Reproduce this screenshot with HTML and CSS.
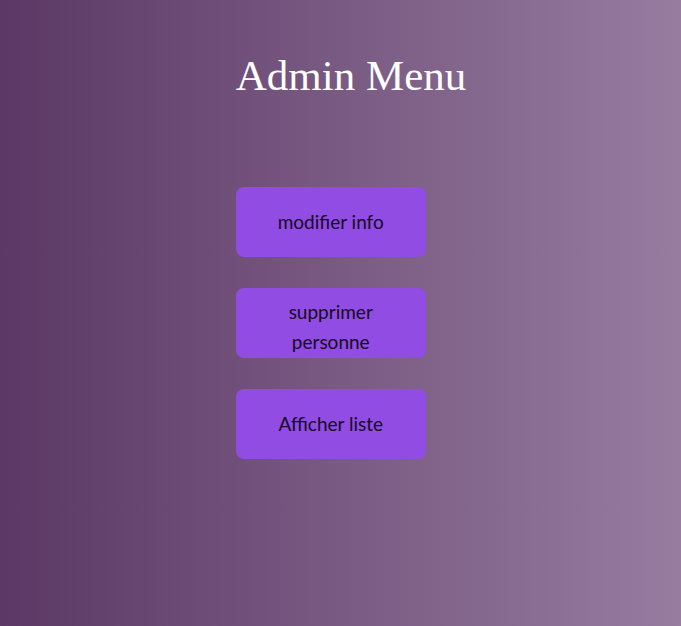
FILE: index.html
```html
<!DOCTYPE html>
<html lang="fr">
<head>
<meta charset="utf-8">
<title>Admin Menu</title>
<link rel="stylesheet" href="styles.css">
</head>
<body>
<main class="menu">
  <h1 class="title">Admin Menu</h1>
  <div class="actions">
    <button class="btn">modifier info</button>
    <button class="btn btn-wrap">supprimer personne</button>
    <button class="btn">Afficher liste</button>
  </div>
</main>
</body>
</html>
```

FILE: styles.css
```css
html, body {
  margin: 0;
  height: 100%;
}
body {
  background: linear-gradient(to right, #5b3865, #977ca0);
  display: flex;
  justify-content: center;
  padding-left: 21px;
  box-sizing: border-box;
}
.menu {
  display: flex;
  flex-direction: column;
  align-items: flex-start;
}
.title {
  margin: 51px 0 0 0;
  font-family: "Liberation Serif", serif;
  font-weight: normal;
  font-size: 43px;
  line-height: 49px;
  color: #ffffff;
}
.actions {
  margin-top: 87px;
  display: flex;
  flex-direction: column;
  gap: 31px;
}
.btn {
  width: 190px;
  height: 70px;
  box-sizing: border-box;
  border: none;
  border-radius: 8px;
  background: #914ce3;
  color: #160826;
  font-family: "Lato", sans-serif;
  font-size: 19px;
  line-height: 30px;
  padding: 0 30px;
  display: flex;
  align-items: center;
  justify-content: center;
  text-align: center;
}
.btn-wrap {
  padding-top: 8px;
}
```
